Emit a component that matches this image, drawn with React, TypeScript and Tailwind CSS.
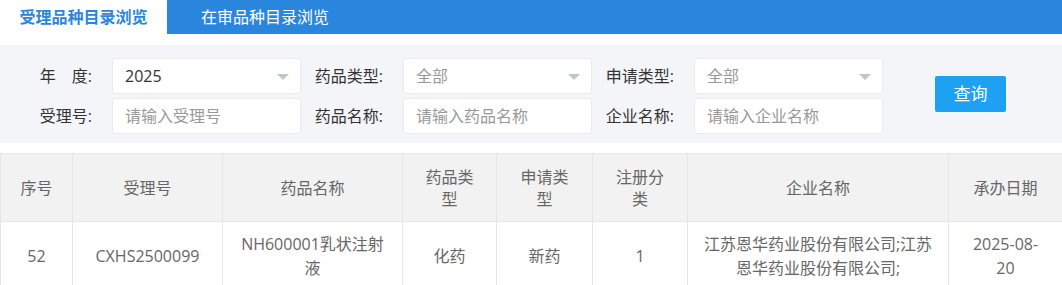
const font = { fontFamily: '"Open Sans", "Noto Sans CJK SC", sans-serif' };

const Arrow = () => (
  <span className="absolute right-[11px] top-[15px] w-0 h-0 border-l-[6px] border-r-[6px] border-t-[6px] border-l-transparent border-r-transparent border-t-[#c0c4cc]" />
);

const Field = ({ label, value, placeholder, select, dark }: { label: string; value?: string; placeholder?: string; select?: boolean; dark?: boolean }) => (
  <div className="flex items-center">
    <div className="w-[102px] pr-5 text-right text-[16px] text-[#333]">{label}</div>
    <div className="relative w-[189px] h-9 bg-white border border-[#ebebeb] rounded-[3px] flex items-center pl-3 text-[16px]">
      <span className={dark ? 'text-[#333]' : 'text-[#999]'}>{value ?? placeholder}</span>
      {select && <Arrow />}
    </div>
  </div>
);

const cols = [72, 150, 180, 94, 96, 95, 261, 114];
const pads = ['px-2', 'px-5', 'px-4', 'px-5', 'px-5', 'px-5', 'px-[14px]', 'px-5'];

export default function App() {
  return (
    <div className="w-[1062px] h-[285px] bg-white overflow-hidden" style={font}>
      <div className="flex h-[34px] bg-[#2a86dc]">
        <div className="w-[167px] bg-white flex items-center justify-center text-[16px] font-bold text-[#2a86dc]">受理品种目录浏览</div>
        <div className="pl-[34px] flex items-center text-[16px] text-white">在审品种目录浏览</div>
      </div>

      <div className="mt-[11px] bg-[#f4f5f9] h-[98px] pl-[10px] pt-[13px] flex items-center">
        <div className="flex flex-col gap-1 self-start">
          <div className="flex">
            <Field label="年　度:" value="2025" select dark />
            <Field label="药品类型:" value="全部" select />
            <Field label="申请类型:" value="全部" select />
          </div>
          <div className="flex">
            <Field label="受理号:" placeholder="请输入受理号" />
            <Field label="药品名称:" placeholder="请输入药品名称" />
            <Field label="企业名称:" placeholder="请输入企业名称" />
          </div>
        </div>
        <button className="ml-[52px] mb-[13px] w-[71px] h-9 rounded-[2px] bg-[#1ea0f3] text-white text-[17px]">查询</button>
      </div>

      <table className="mt-[10px] table-fixed border-collapse w-[1062px] text-[16px] text-[#666] text-center">
        <colgroup>
          {cols.map((w, i) => (
            <col key={i} style={{ width: w }} />
          ))}
        </colgroup>
        <thead>
          <tr className="bg-[#f2f2f2] h-[68px] leading-[22px]">
            {['序号', '受理号', '药品名称', '药品类型', '申请类型', '注册分类', '企业名称', '承办日期'].map((h, i) => (
              <th key={h} className={`font-normal border border-[#e6e6e6] py-[10px] ${pads[i]}`}>{h}</th>
            ))}
          </tr>
        </thead>
        <tbody>
          <tr className="leading-6">
            {['52', 'CXHS2500099', 'NH600001乳状注射液', '化药', '新药', '1', '江苏恩华药业股份有限公司;江苏恩华药业股份有限公司;', '2025-08-20'].map((c, i) => (
              <td key={i} className={`border border-[#e6e6e6] py-[10px] break-all ${pads[i]}`}>{c}</td>
            ))}
          </tr>
        </tbody>
      </table>
    </div>
  );
}
